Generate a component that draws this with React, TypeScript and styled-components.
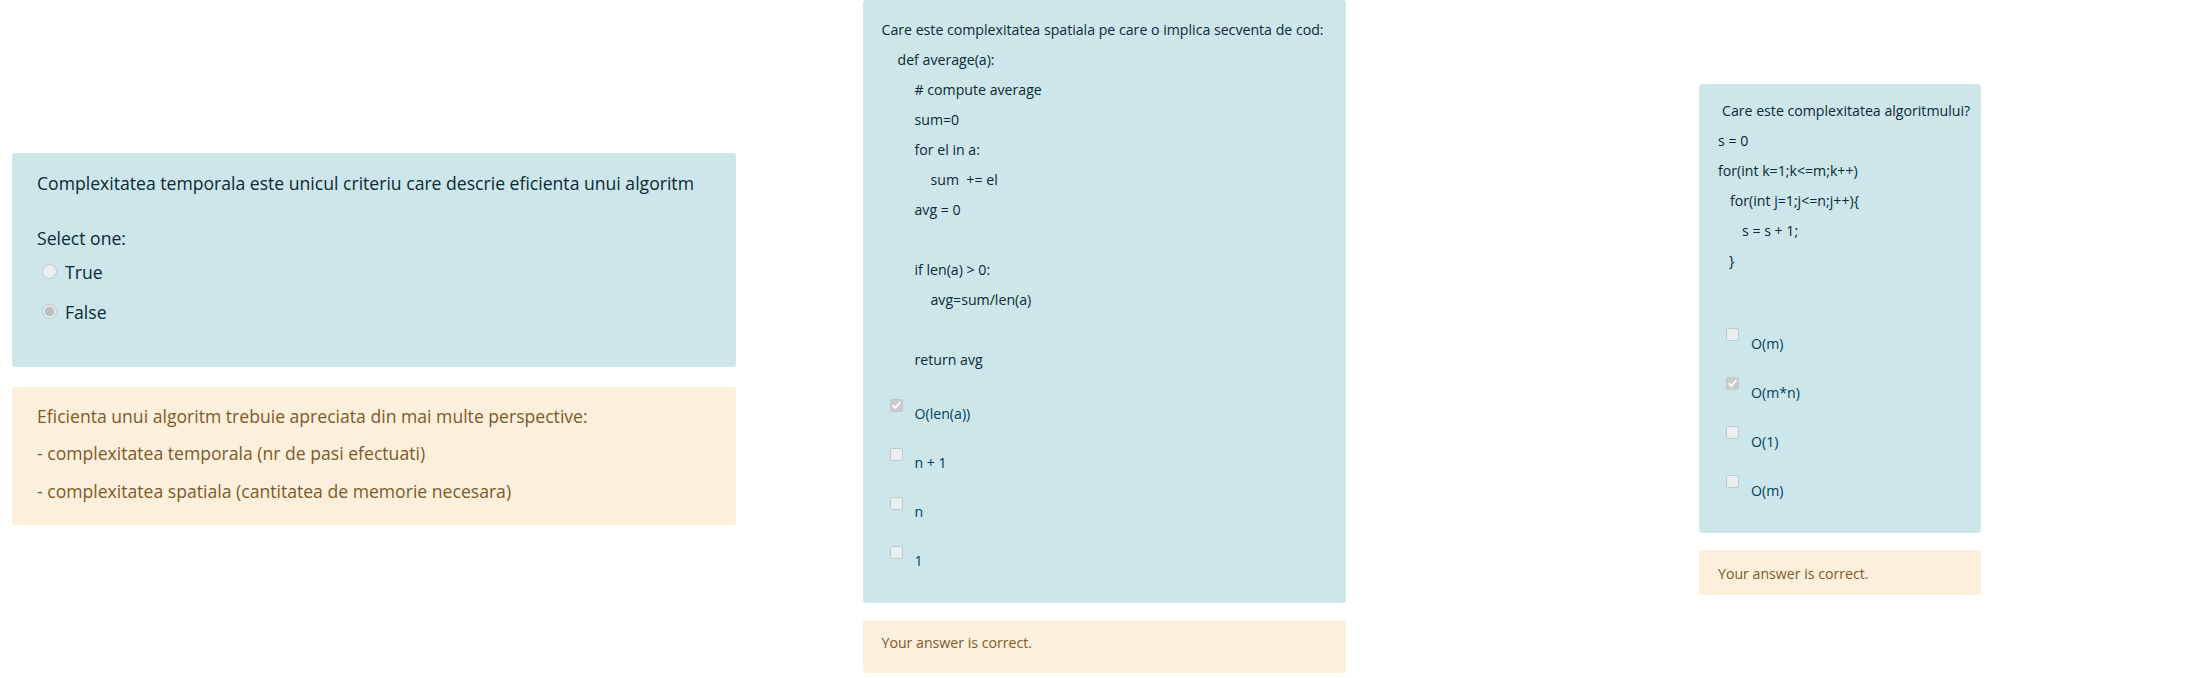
import React from "react";
import styled, { createGlobalStyle } from "styled-components";

const Global = createGlobalStyle`
  html, body { margin: 0; padding: 0; background: #ffffff; }
  body { font-family: "Open Sans", "Noto Sans", sans-serif; }
  * { box-sizing: border-box; }
`;

const Page = styled.div`
  display: grid;
  grid-template-columns: repeat(3, 1fr);
  height: 678px;
  width: 2208px;
  align-items: center;
`;

const Column = styled.div<{ $stretch?: boolean; $top?: boolean }>`
  display: flex;
  flex-direction: column;
  align-items: ${(p) => (p.$stretch ? "stretch" : "center")};
  align-self: ${(p) => (p.$top ? "start" : "center")};
  padding-left: ${(p) => (p.$stretch ? "12px" : "0")};
`;

const Stack = styled.div<{ $width?: number; $gap: number }>`
  display: flex;
  flex-direction: column;
  gap: ${(p) => p.$gap}px;
  width: ${(p) => (p.$width ? `${p.$width}px` : "auto")};
`;

const Formulation = styled.div<{ $pad: string }>`
  background: #cde6ea;
  border-radius: 3px;
  color: #0b2a33;
  padding: ${(p) => p.$pad};
`;

const Outcome = styled.div<{ $pad: string; $size: number; $lh: number }>`
  background: #fcefdc;
  border-radius: 2px;
  color: #7d5a29;
  padding: ${(p) => p.$pad};
  font-size: ${(p) => p.$size}px;
  line-height: ${(p) => p.$lh}px;
`;

const BigText = styled.div<{ $mt?: number }>`
  font-size: 17.6px;
  line-height: 26px;
  margin-top: ${(p) => p.$mt ?? 0}px;
  white-space: nowrap;
`;

const RadioRow = styled.label`
  display: flex;
  align-items: center;
  height: 40px;
  font-size: 17.6px;
  color: #0b2a33;
  gap: 8px;
  padding-left: 5px;
`;

const Radio = styled.span<{ $checked?: boolean }>`
  width: 15px;
  height: 15px;
  border-radius: 50%;
  border: 1px solid #c3c9cc;
  background: ${(p) =>
    p.$checked
      ? "radial-gradient(circle, #bcc0c2 0 4.5px, #e4e9eb 5px)"
      : "#e8eef0"};
  flex: none;
`;

const SmallText = styled.div<{ $indent?: number }>`
  font-size: 14.15px;
  line-height: 30px;
  height: 30px;
  padding-left: ${(p) => p.$indent ?? 0}px;
  white-space: pre;
`;

const Options = styled.div<{ $mt: number }>`
  display: flex;
  flex-direction: column;
  margin-top: ${(p) => p.$mt}px;
`;

const OptionRow = styled.label`
  display: flex;
  align-items: center;
  height: 49px;
  padding-left: 8px;
  gap: 12px;
  font-size: 14.15px;
  color: #00415c;
`;

const Box = styled.span<{ $checked?: boolean }>`
  width: 13px;
  height: 13px;
  border-radius: 2px;
  border: 1px solid ${(p) => (p.$checked ? "#c4c8ca" : "#c2c9cb")};
  background: ${(p) => (p.$checked ? "#c8cccd" : "#e9eef0")};
  margin-bottom: 17px;
  flex: none;
  display: flex;
  align-items: center;
  justify-content: center;
`;

const Check = () => (
  <svg width="9" height="9" viewBox="0 0 9 9">
    <polyline
      points="1.2,4.8 3.5,7 7.8,1.8"
      fill="none"
      stroke="#ffffff"
      strokeWidth="1.8"
      strokeLinecap="round"
      strokeLinejoin="round"
    />
  </svg>
);

const Option = ({ label, checked }: { label: string; checked?: boolean }) => (
  <OptionRow>
    <Box $checked={checked}>{checked && <Check />}</Box>
    <span>{label}</span>
  </OptionRow>
);

const midCode: [string, number][] = [
  ["Care este complexitatea spatiala pe care o implica secventa de cod:", 0],
  ["def average(a):", 16],
  ["# compute average", 33],
  ["sum=0", 33],
  ["for el in a:", 33],
  ["sum  += el", 49],
  ["avg = 0", 33],
  ["", 0],
  ["if len(a) > 0:", 33],
  ["avg=sum/len(a)", 49],
  ["", 0],
  ["return avg", 33],
];

const rightCode: [string, number][] = [
  ["Care este complexitatea algoritmului?", 4],
  ["s = 0", 0],
  ["for(int k=1;k<=m;k++)", 0],
  ["for(int j=1;j<=n;j++){", 12],
  ["s = s + 1;", 24],
  ["}", 11],
];

export default function App() {
  return (
    <>
      <Global />
      <Page>
        <Column $stretch>
          <Stack $gap={20}>
            <Formulation $pad="17px 25px 35px">
              <BigText>
                Complexitatea temporala este unicul criteriu care descrie eficienta unui algoritm
              </BigText>
              <BigText $mt={29}>Select one:</BigText>
              <div style={{ height: 1 }} />
              <RadioRow>
                <Radio />
                <span>True</span>
              </RadioRow>
              <RadioRow>
                <Radio $checked />
                <span>False</span>
              </RadioRow>
            </Formulation>
            <Outcome $pad="11px 25px 15px" $size={17.6} $lh={37.5}>
              <div>Eficienta unui algoritm trebuie apreciata din mai multe perspective:</div>
              <div>- complexitatea temporala (nr de pasi efectuati)</div>
              <div>- complexitatea spatiala (cantitatea de memorie necesara)</div>
            </Outcome>
          </Stack>
        </Column>

        <Column $top>
          <Stack $width={483} $gap={17}>
            <Formulation $pad="15px 19px 18px">
              {midCode.map(([t, i], k) => (
                <SmallText key={k} $indent={i}>
                  {t}
                </SmallText>
              ))}
              <Options $mt={14}>
                <Option label="O(len(a))" checked />
                <Option label="n + 1" />
                <Option label="n" />
                <Option label="1" />
              </Options>
            </Formulation>
            <Outcome $pad="13px 19px 20px" $size={14.15} $lh={20}>
              Your answer is correct.
            </Outcome>
          </Stack>
        </Column>

        <Column>
          <Stack $width={282} $gap={17}>
            <Formulation $pad="12px 19px 18px">
              {rightCode.map(([t, i], k) => (
                <SmallText key={k} $indent={i}>
                  {t}
                </SmallText>
              ))}
              <Options $mt={43}>
                <Option label="O(m)" />
                <Option label="O(m*n)" checked />
                <Option label="O(1)" />
                <Option label="O(m)" />
              </Options>
            </Formulation>
            <Outcome $pad="14px 19px 11px" $size={14.15} $lh={20}>
              Your answer is correct.
            </Outcome>
          </Stack>
        </Column>
      </Page>
    </>
  );
}
